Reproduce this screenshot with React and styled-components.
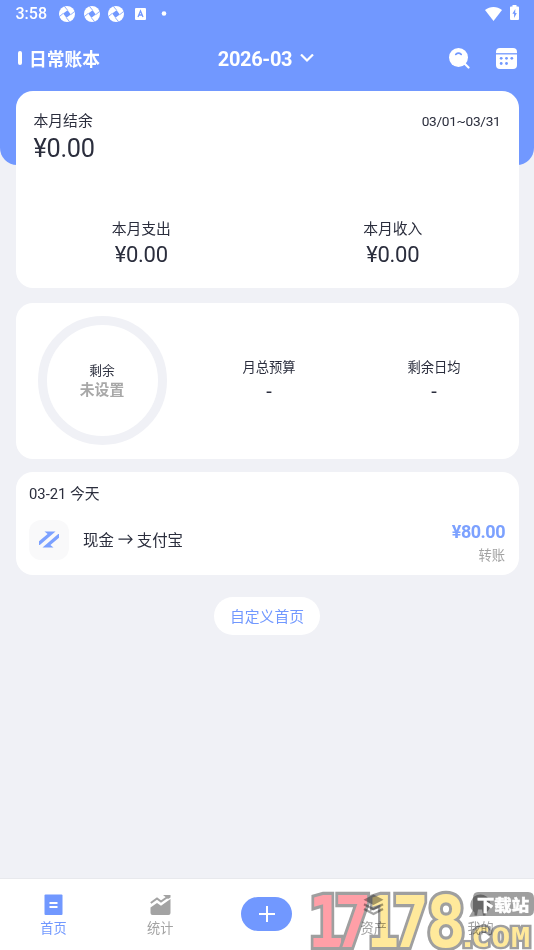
import styled, { createGlobalStyle } from "styled-components";

const GlobalStyle = createGlobalStyle`
  * {
    box-sizing: border-box;
  }
  body {
    margin: 0;
    background: #f0f1f6;
    font-family: Roboto, "Noto Sans CJK SC", sans-serif;
    color: #2b2e3d;
  }
`;

const Page = styled.div`
  position: relative;
  display: flex;
  flex-direction: column;
  width: 534px;
  height: 950px;
  overflow: hidden;
`;

const Top = styled.header`
  flex: none;
  height: 165px;
  background: #7198ff;
  border-radius: 0 0 17px 17px;
  color: #ffffff;
`;

const StatusBar = styled.div`
  display: flex;
  align-items: center;
  justify-content: space-between;
  height: 27px;
  padding: 0 15px 0 15.5px;
`;

const StatusGroup = styled.div`
  display: flex;
  align-items: center;
  gap: ${(props) => props.$gap}px;
`;

const Clock = styled.span`
  width: 35px;
  font-size: 16px;
  font-weight: 500;
  line-height: 28px;
`;

const TitleBar = styled.div`
  display: grid;
  grid-template-columns: 1fr auto 1fr;
  align-items: center;
  height: 63px;
  padding: 0 17px 0 18px;
`;

const Book = styled.div`
  display: flex;
  align-items: center;
  gap: 7px;
  margin-top: -2px;
  font-size: 17.8px;
  font-weight: 700;

  &::before {
    content: "";
    width: 4px;
    height: 14px;
    border-radius: 2px;
    background: #ffffff;
  }
`;

const Month = styled.div`
  display: flex;
  align-items: center;
  gap: 8px;
  margin-right: 3px;
  font-size: 20px;
  font-weight: 700;
  letter-spacing: -0.35px;
`;

const Actions = styled.div`
  display: flex;
  align-items: center;
  justify-content: flex-end;
  gap: 25px;
`;

const Content = styled.main`
  display: flex;
  flex: 1;
  flex-direction: column;
  align-items: center;
  margin-top: -74.5px;
`;

const Card = styled.section`
  width: 503px;
  background: #ffffff;
  border-radius: 17px;
`;

const SummaryCard = styled(Card)`
  height: 197.5px;
  padding: 20.5px 18px 0;
`;

const BudgetCard = styled(Card)`
  display: flex;
  align-items: center;
  height: 156px;
  margin-top: 14.5px;
  padding-left: 22px;
`;

const RecordCard = styled(Card)`
  height: 102.5px;
  margin-top: 13.5px;
  padding: 12px 13.5px 0;
`;

const SummaryHead = styled.div`
  display: flex;
  justify-content: space-between;
`;

const Label = styled.div`
  font-size: ${(props) => props.$size || 14.8}px;
  line-height: 20px;
  color: ${(props) => props.$color || "#2b2e3d"};
  white-space: nowrap;
`;

const Period = styled(Label)`
  font-size: 13.7px;
  letter-spacing: -0.3px;
`;

const Amount = styled.div`
  font-size: ${(props) => props.$size}px;
  line-height: ${(props) => props.$line}px;
  letter-spacing: -0.3px;
`;

const Totals = styled.div`
  display: grid;
  grid-template-columns: 1fr 1fr;
  margin: 52px -18px 0;
  text-align: center;
`;

const Ring = styled.div`
  display: flex;
  flex: none;
  flex-direction: column;
  align-items: center;
  justify-content: center;
  width: 129px;
  height: 129px;
  margin-bottom: 1px;
  border: 9px solid #f0f1f6;
  border-radius: 50%;
`;

const Unset = styled.div`
  font-size: 14.8px;
  font-weight: 700;
  line-height: 18px;
  color: #a8a8a8;
`;

const BudgetItem = styled.div`
  width: 165px;
  text-align: center;

  &:nth-child(2) {
    margin-left: 20px;
  }
`;

const Dash = styled.div`
  font-size: 20px;
  line-height: 26px;
`;

const Row = styled.div`
  display: flex;
  align-items: flex-start;
  margin-top: 15px;
`;

const IconBox = styled.div`
  display: flex;
  align-items: center;
  justify-content: center;
  width: 40px;
  height: 40px;
  margin: 0.5px 14px 0 0;
  border-radius: 12px;
  background: #f9f9fa;
`;

const RecordName = styled.div`
  display: flex;
  align-items: center;
  gap: 4px;
  flex: 1;
  height: 40px;
  font-size: 15.4px;
`;

const RecordSide = styled.div`
  text-align: right;
`;

const RecordAmount = styled.div`
  margin-bottom: 1px;
  font-size: 18px;
  font-weight: 700;
  line-height: 26px;
  letter-spacing: -0.5px;
  color: #7ca1ff;
`;

const CustomButton = styled.button`
  width: 106px;
  height: 38px;
  margin-top: 22.5px;
  padding: 0 0 1px;
  border: 0;
  border-radius: 19px;
  background: #ffffff;
  font: 14.8px Roboto, "Noto Sans CJK SC", sans-serif;
  color: #7198ff;
`;

const TabBar = styled.nav`
  display: grid;
  flex: none;
  grid-template-columns: repeat(5, 1fr);
  height: 72px;
  border-top: 1px solid #e8e9ed;
  background: #ffffff;
`;

const Tab = styled.div`
  display: flex;
  flex-direction: column;
  align-items: center;
  padding-top: 15px;
  font-size: 13.2px;
  line-height: 20px;
  color: ${(props) => (props.$active ? "#7198ff" : "#a3a3a3")};

  svg {
    margin-bottom: 3px;
  }
`;

const AddButton = styled.div`
  display: flex;
  align-items: center;
  justify-content: center;
  width: 51px;
  height: 34px;
  margin-top: 3px;
  border-radius: 17px;
  background: #7198ff;

  svg {
    margin: 0;
  }
`;

const Stamp = styled.svg`
  position: absolute;
  right: 0;
  bottom: 0;
  pointer-events: none;
  mix-blend-mode: ${(props) => props.$blend || "normal"};
`;

const Digit = styled.text`
  font-family: "DejaVu Sans Mono", monospace;
  font-size: 72px;
  font-weight: 700;
  fill: ${(props) => props.$fill};
  stroke: #9f9f9f;
  stroke-width: 6.5px;
  stroke-linejoin: miter;
  paint-order: stroke;
`;

const Domain = styled.text`
  font-family: "DejaVu Sans Mono", monospace;
  font-size: 26px;
  font-weight: 700;
  fill: #ffe99b;
  stroke: #9f9f9f;
  stroke-width: 4.5px;
  paint-order: stroke;
`;

const StampLabel = styled.text`
  font-family: "Noto Sans CJK SC", sans-serif;
  font-size: 15.5px;
  font-weight: 900;
  fill: #ffffff;
  stroke: #ffffff;
  stroke-width: 0.4px;
`;

const Shutter = () => (
  <svg width="16" height="16" viewBox="0 0 16 16">
    <circle cx="8" cy="8" r="8" fill="#fff" />
    <path d="M8.6 4.2 11.8 8.6 7.4 11.8 4.2 7.4Z" fill="#7198ff" />
    <path
      d="M8.6 4.2 5.4.3M11.8 8.6 15.7 5.4M7.4 11.8l3.2 3.9M4.2 7.4.3 10.6"
      stroke="#7198ff"
      strokeWidth=".8"
    />
  </svg>
);

const Keyboard = () => (
  <svg width="13" height="12" viewBox="-2 0 13 12">
    <rect width="11" height="12" rx="1" fill="#fff" />
    <path d="m3 9 2.5-6L8 9M4 7h3" fill="none" stroke="#7198ff" strokeWidth="1.3" />
  </svg>
);

const Wifi = () => (
  <svg width="17" height="14" viewBox="0 0 17 14">
    <path d="M0 3C5-1 12-1 17 3L8.5 14Z" fill="#fff" />
  </svg>
);

const Battery = () => (
  <svg width="9" height="17" viewBox="0 0 9 17">
    <path d="M2.5 1.5V0h4v1.5H8q1 0 1 1V14q0 1-1 1H1q-1 0-1-1V2.5q0-1 1-1Z" fill="#fff" />
    <path d="M5.3 4 2.4 8.7h1.7V13l2.7-5H5.2Z" fill="#7198ff" />
  </svg>
);

const Search = () => (
  <svg width="22" height="21" viewBox="0 0 22 21">
    <circle cx="9.5" cy="9.5" r="9.5" fill="#fff" />
    <path d="m15.5 15.5 4 4" stroke="#fff" strokeWidth="2.2" strokeLinecap="round" />
    <path
      d="M6.8 6.4q2.7-2.4 5.4 0"
      fill="none"
      stroke="#7198ff"
      strokeWidth="1.7"
      strokeLinecap="round"
    />
  </svg>
);

const Calendar = () => (
  <svg width="21" height="21" viewBox="0 0 21 21">
    <rect width="21" height="21" rx="4" fill="#fff" />
    <path d="M0 5.8h21" stroke="#7198ff" strokeWidth="1.3" />
    <g fill="#7198ff">
      <circle cx="5.2" cy="10.3" r="1.4" />
      <circle cx="10.5" cy="10.3" r="1.4" />
      <circle cx="15.8" cy="10.3" r="1.4" />
      <circle cx="5.2" cy="15.5" r="1.4" />
      <circle cx="10.5" cy="15.5" r="1.4" />
    </g>
  </svg>
);

const Transfer = () => (
  <svg width="20" height="17" viewBox="0 0 20 17" fill="#7ca1ff">
    <path d="M5.5.5h11L.8 14H0v-3.8L8.6 3Z" />
    <path d="M14.5 16.5h-11L19.2 3h.8v3.8L11.4 14Z" />
  </svg>
);

const Arrow = () => (
  <svg width="15" height="12" viewBox="0 0 15 12">
    <path d="M.5 6.2H14M9.7 1.8 14 6.2l-4.3 4.3" fill="none" stroke="#2b2e3d" strokeWidth="1.2" />
  </svg>
);

const HomeIcon = () => (
  <svg width="19" height="22" viewBox="0 0 19 22">
    <rect y=".5" x=".5" width="18" height="20.5" rx="1" fill="currentColor" />
    <path d="M5.5 9h8M5.5 13h8" stroke="#fff" strokeWidth="1.8" />
  </svg>
);

const ChartIcon = () => (
  <svg width="21" height="22" viewBox="0 0 21 22">
    <path
      d="M.5 13.5 7 9l4 2.8L20.5 5v14q0 2-2 2h-16q-2 0-2-2Z"
      fill="currentColor"
    />
    <path d="M.8 9 7 4.5l4 3L17.5 3" fill="none" stroke="currentColor" strokeWidth="2" />
    <path d="M13 1h7.5v2.5L18 5Z" fill="currentColor" />
  </svg>
);

const StackIcon = () => (
  <svg width="21" height="22" viewBox="0 0 21 22">
    <path d="m10.5.5 10 5.3-10 5.2L.5 5.8Z" fill="currentColor" />
    <path
      d="m1 10.2 9.5 5 9.5-5M1 15l9.5 5 9.5-5"
      fill="none"
      stroke="currentColor"
      strokeWidth="2.4"
    />
  </svg>
);

const UserIcon = () => (
  <svg width="21" height="22" viewBox="0 0 21 22">
    <path
      d="M10.5.5a10 10 0 0 1 5 18.6v2.4H13l-1-6H8l-1 6H4.5v-3A10 10 0 0 1 10.5.5"
      fill="currentColor"
    />
  </svg>
);

const digits = [
  { char: "1", x: 308, width: 36, fill: "#ff9fa7" },
  { char: "7", x: 334, width: 38, fill: "#ff9fa7" },
  { char: "1", x: 367, width: 32, fill: "#ffe99b" },
  { char: "7", x: 392, width: 37, fill: "#ffe99b" },
  { char: "8", x: 426, width: 40, fill: "#ffe99b" },
];

function Watermark() {
  return (
    <>
      <Stamp $blend="multiply" width="230" height="64" viewBox="304 886 230 64">
        {digits.map((digit) => (
          <Digit
            key={digit.x}
            x={digit.x}
            y="946.5"
            textLength={digit.width}
            lengthAdjust="spacingAndGlyphs"
            $fill={digit.fill}
          >
            {digit.char}
          </Digit>
        ))}
        <Domain transform="scale(1.22 1)" x="375.5 386.3 402.6 418.8" y="947">
          .COM
        </Domain>
        <path
          d="M478 892h50q6 0 6 6v12q0 6-6 6h-48l-11 1 4-7v-12q0-6 5-6"
          fill="#9f9f9f"
        />
      </Stamp>
      <Stamp width="230" height="64" viewBox="304 886 230 64">
        <StampLabel x="477" y="910.5" textLength="52" lengthAdjust="spacingAndGlyphs">
          下载站
        </StampLabel>
      </Stamp>
    </>
  );
}

function App() {
  return (
    <Page>
      <GlobalStyle />
      <Top>
        <StatusBar>
          <StatusGroup $gap={8.5}>
            <Clock>3:58</Clock>
            <Shutter />
            <Shutter />
            <Shutter />
            <Keyboard />
            <svg width="20" height="5">
              <circle cx="10" cy="2.5" r="2.3" fill="#fff" />
            </svg>
          </StatusGroup>
          <StatusGroup $gap={8}>
            <Wifi />
            <Battery />
          </StatusGroup>
        </StatusBar>
        <TitleBar>
          <Book>日常账本</Book>
          <Month>
            2026-03
            <svg width="14" height="9" viewBox="0 0 14 9">
              <path d="m1 .5 6 6 6-6" fill="none" stroke="#fff" strokeWidth="2.2" />
            </svg>
          </Month>
          <Actions>
            <Search />
            <Calendar />
          </Actions>
        </TitleBar>
      </Top>
      <Content>
        <SummaryCard>
          <SummaryHead>
            <Label>本月结余</Label>
            <Period>03/01~03/31</Period>
          </SummaryHead>
          <Amount $size={25.3} $line={36}>
            ¥0.00
          </Amount>
          <Totals>
            <div>
              <Label>本月支出</Label>
              <Amount $size={22} $line={32}>
                ¥0.00
              </Amount>
            </div>
            <div>
              <Label>本月收入</Label>
              <Amount $size={22} $line={32}>
                ¥0.00
              </Amount>
            </div>
          </Totals>
        </SummaryCard>
        <BudgetCard>
          <Ring>
            <Label $size={12.7}>剩余</Label>
            <Unset>未设置</Unset>
          </Ring>
          <BudgetItem>
            <Label $size={13.3}>月总预算</Label>
            <Dash>-</Dash>
          </BudgetItem>
          <BudgetItem>
            <Label $size={13.3}>剩余日均</Label>
            <Dash>-</Dash>
          </BudgetItem>
        </BudgetCard>
        <RecordCard>
          <Label>03-21 今天</Label>
          <Row>
            <IconBox>
              <Transfer />
            </IconBox>
            <RecordName>
              现金
              <Arrow />
              支付宝
            </RecordName>
            <RecordSide>
              <RecordAmount>¥80.00</RecordAmount>
              <Label $size={13.3} $color="#a3a3a3">
                转账
              </Label>
            </RecordSide>
          </Row>
        </RecordCard>
        <CustomButton>自定义首页</CustomButton>
      </Content>
      <TabBar>
        <Tab $active>
          <HomeIcon />
          首页
        </Tab>
        <Tab>
          <ChartIcon />
          统计
        </Tab>
        <Tab>
          <AddButton>
            <svg width="16" height="16" viewBox="0 0 16 16">
              <path d="M8 0v16M0 8h16" stroke="#fff" strokeWidth="2" />
            </svg>
          </AddButton>
        </Tab>
        <Tab>
          <StackIcon />
          资产
        </Tab>
        <Tab>
          <UserIcon />
          我的
        </Tab>
      </TabBar>
      <Watermark />
    </Page>
  );
}

export default App;
